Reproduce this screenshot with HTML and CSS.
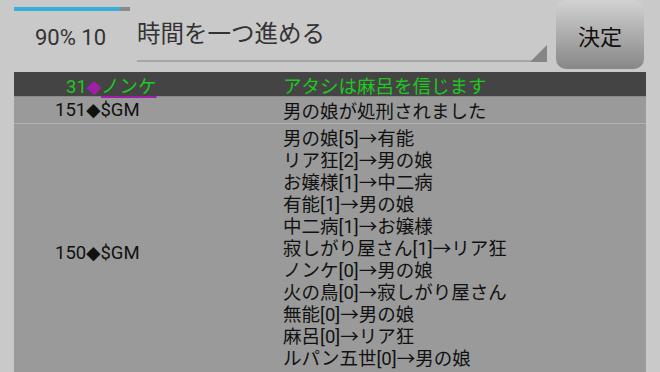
FILE: index.html
```html
<!DOCTYPE html>
<html lang="ja">
<head>
  <meta charset="UTF-8">
  <meta name="viewport" content="width=device-width, initial-scale=1.0">
  <title>時間を一つ進める</title>
  <link rel="stylesheet" href="styles.css">
</head>
<body>
  <!-- Top bar -->
  <div class="top">
    <div class="status">
      <div class="progress"><span class="progress-fill"></span></div>
      <div class="level">90% 10</div>
    </div>
    <div class="command">時間を一つ進める</div>
    <button class="decide">決定</button>
  </div>

  <!-- Log table -->
  <div class="log">
    <div class="row head">
      <div class="who">31<span class="dia mark">◆</span><span class="name">ノンケ</span></div>
      <div class="msg">アタシは麻呂を信じます</div>
    </div>
    <div class="row">
      <div class="who">151<span class="dia">◆</span>$GM</div>
      <div class="msg">男の娘が処刑されました</div>
    </div>
    <div class="row last">
      <div class="who">150<span class="dia">◆</span>$GM</div>
      <div class="msg">
        男の娘[5]→有能<br>
        リア狂[2]→男の娘<br>
        お嬢様[1]→中二病<br>
        有能[1]→男の娘<br>
        中二病[1]→お嬢様<br>
        寂しがり屋さん[1]→リア狂<br>
        ノンケ[0]→男の娘<br>
        火の鳥[0]→寂しがり屋さん<br>
        無能[0]→男の娘<br>
        麻呂[0]→リア狂<br>
        ルパン五世[0]→男の娘
      </div>
    </div>
  </div>
</body>
</html>
```

FILE: styles.css
```css
* {
  margin: 0;
  padding: 0;
  box-sizing: border-box;
}

body {
  font-family: Roboto, "Noto Sans CJK JP", sans-serif;
  background-color: #c9c9c9;
  color: #111;
  width: 660px;
  height: 372px;
  overflow: hidden;
}

.top {
  display: flex;
  height: 72px;
  padding-left: 14px;
}

.status {
  width: 123px;
}

.progress {
  margin-top: 7px;
  width: 116px;
  height: 4px;
  background-color: #8a8a8a;
}

.progress-fill {
  display: block;
  width: 106px;
  height: 4px;
  background-color: #3aaedb;
}

.level {
  margin-top: 13px;
  padding-left: 21px;
  font-size: 22px;
  line-height: 28px;
  color: #333;
}

.command {
  position: relative;
  width: 410px;
  height: 62px;
  padding-top: 19px;
  font-size: 23.5px;
  line-height: 30px;
  color: #333;
  border-bottom: 2px solid #a6a6a6;
}

.command::after {
  content: "";
  position: absolute;
  right: 0;
  bottom: -2px;
  border-left: 17px solid transparent;
  border-bottom: 17px solid #858585;
}

.decide {
  margin-left: 9px;
  width: 88px;
  height: 69px;
  border: none;
  border-radius: 10px;
  background: linear-gradient(to bottom, #d2d2d2, #878787);
  font-family: inherit;
  font-size: 22px;
  color: #111;
}

.log {
  margin-left: 14px;
  width: 632px;
}

.row {
  display: grid;
  grid-template-columns: 269px 1fr;
  align-items: center;
  background-color: #9a9a9a;
  font-size: 18.5px;
  height: 27px;
  border-bottom: 1px solid #b2b2b2;
}

.row .who {
  padding-left: 41px;
}

.dia {
  font-family: "DejaVu Sans", sans-serif;
}

.head {
  height: 25px;
  background-color: #444;
  color: #1fc81f;
  border-bottom: 1px solid #8a8a8a;
}

.head .who {
  padding-left: 52px;
}

.mark {
  color: #a01fa8;
}

.name {
  text-decoration: underline;
  text-decoration-color: #a01fa8;
  text-decoration-thickness: 2px;
  text-underline-offset: 3px;
}

.last {
  height: auto;
  padding-top: 4px;
  border-bottom: none;
}

.last .msg {
  line-height: 22px;
  padding-bottom: 8px;
}
```
